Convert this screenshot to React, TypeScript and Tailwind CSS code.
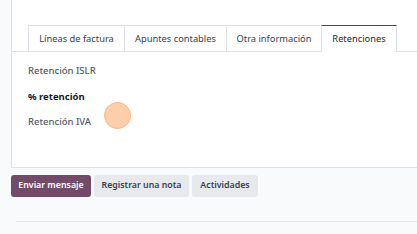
import React from "react";

export default function App() {
  const font = { fontFamily: '"Noto Sans", "Open Sans", sans-serif' };
  return (
    <div className="w-[417px] h-[234px] bg-[#f9fafb] overflow-hidden relative" style={font}>
      <div className="ml-[11px] h-[168px] bg-white border-l border-b border-[#dee2e6] pt-[25px] flex flex-col">
        <div className="flex pl-[16px] border-b border-[#dee2e6] h-[27px]">
          <div className="w-[96px] h-[27px] border-t border-l border-[#dee2e6] flex items-center justify-center text-[9.3px] text-[#374151]">Líneas de factura</div>
          <div className="w-[102px] h-[27px] border-t border-l border-[#dee2e6] flex items-center justify-center text-[9.3px] text-[#374151]">Apuntes contables</div>
          <div className="w-[95px] h-[27px] border-t border-l border-[#dee2e6] flex items-center justify-center text-[9.3px] text-[#374151]">Otra información</div>
          <div className="w-[76px] h-[27px] mb-[-1px] bg-white border-t border-t-[#4b4b5a] border-l border-r border-[#dee2e6] flex items-center justify-center text-[9.3px] text-[#1f2937]">Retenciones</div>
        </div>
        <div className="pl-[16px] pt-[12px] flex flex-col text-[9.5px]">
          <div className="h-[25.5px] text-[#525a66] font-medium leading-[13px]">Retención ISLR</div>
          <div className="h-[25.5px] text-[#111827] font-bold leading-[13px]">% retención</div>
          <div className="h-[25.5px] text-[#525a66] font-medium leading-[13px]">Retención IVA</div>
        </div>
      </div>
      <div className="flex gap-[3px] ml-[11px] mt-[7px]">
        <div className="w-[80px] h-[22px] rounded-[3px] bg-[#714b67] text-white text-[8.8px] font-semibold flex items-center justify-center">Enviar mensaje</div>
        <div className="w-[95px] h-[22px] rounded-[3px] bg-[#e7e9ed] text-[#374151] text-[8.8px] font-semibold flex items-center justify-center">Registrar una nota</div>
        <div className="w-[66px] h-[22px] rounded-[3px] bg-[#e7e9ed] text-[#374151] text-[8.8px] font-semibold flex items-center justify-center">Actividades</div>
      </div>
      <div className="ml-[16px] mt-[24px] border-t border-[#e5e7eb]"></div>
      <div className="absolute left-[104px] top-[102px] w-[27px] h-[27px] rounded-full bg-[#fdc9a0] border border-[#f4b07c] opacity-90"></div>
    </div>
  );
}
